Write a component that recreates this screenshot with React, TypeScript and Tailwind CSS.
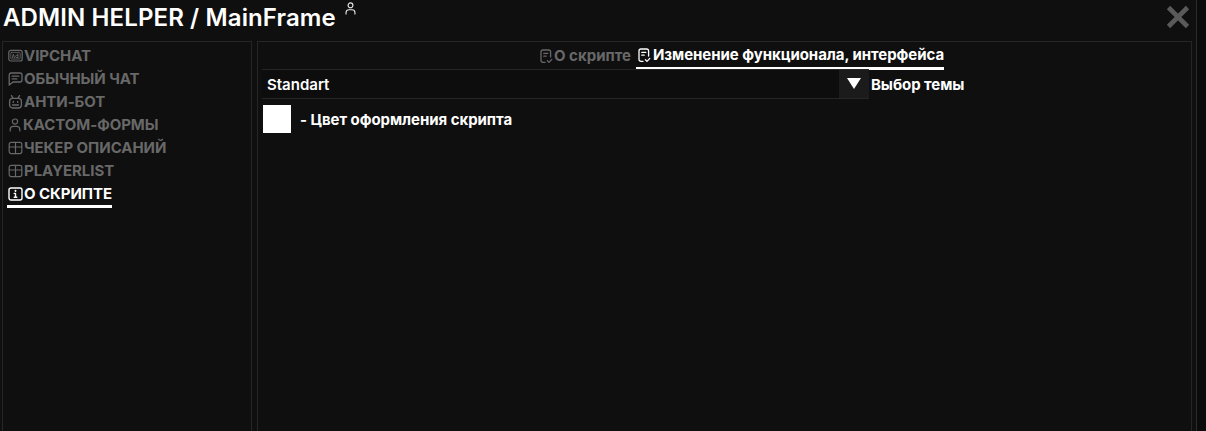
import {ReactNode} from 'react';

const iconProps = {
  fill: 'none',
  stroke: 'currentColor',
  strokeLinecap: 'round' as const,
  strokeLinejoin: 'round' as const,
};

function AdIcon() {
  return (
    <svg width="15" height="14" viewBox="0 0 15 14" {...iconProps} strokeWidth="1.2">
      <rect x="0.8" y="1.4" width="13.4" height="10.6" rx="2" />
      <rect x="2.8" y="3.4" width="9.4" height="6.6" rx="0.8" strokeWidth="0.8" />
      <path d="M4.4 8.8 5.4 5 6.4 8.8M9.9 4.8v4M9.9 8.6H8.8a1 1 0 0 1 0-2.4h1.1" strokeWidth="0.9" />
    </svg>
  );
}

function ChatIcon() {
  return (
    <svg width="15" height="14" viewBox="0 0 15 14" {...iconProps} strokeWidth="1.3">
      <path d="M3 1h9a2 2 0 0 1 2 2v5a2 2 0 0 1-2 2H5l-3.8 3V3a2 2 0 0 1 1.8-2Z" />
      <path d="M4.2 4.2h6.6M4.2 6.9h4.6" />
    </svg>
  );
}

function BotIcon() {
  return (
    <svg width="15" height="14" viewBox="0 0 15 14" {...iconProps} strokeWidth="1.3">
      <path d="M3.5 0.6 5 3.4M11.5 0.6 10 3.4" />
      <rect x="1.6" y="3.4" width="11.8" height="9.6" rx="3" />
      <path d="M5.3 6.4v1M9.7 6.4v1M4.5 10h6" />
    </svg>
  );
}

function UserIcon({size = 14}: {size?: number}) {
  return (
    <svg width={size} height={size} viewBox="0 0 14 14" {...iconProps} strokeWidth="1.2">
      <circle cx="7" cy="3.6" r="2.6" />
      <path d="M2.2 13v-1.6A3.2 3.2 0 0 1 5.4 8.4h3.2a3.2 3.2 0 0 1 3.2 3V13" />
    </svg>
  );
}

function TableIcon() {
  return (
    <svg width="15" height="14" viewBox="0 0 15 14" {...iconProps} strokeWidth="1.2">
      <rect x="1.2" y="1.4" width="12.6" height="11.2" rx="2" />
      <path d="M1.2 6h12.6M7.5 1.4v11.2" />
    </svg>
  );
}

function InfoIcon() {
  return (
    <svg width="15" height="14" viewBox="0 0 15 14" {...iconProps} strokeWidth="1.4">
      <rect x="1" y="1" width="13" height="12" rx="2" />
      <path d="M6.2 6.4h1.3v3.8M6.2 10.2h2.6" />
      <path d="M7.5 3.6v.5" strokeWidth="1.8" />
    </svg>
  );
}

function ScriptIcon() {
  return (
    <svg width="13" height="15" viewBox="0 0 13 15" {...iconProps} strokeWidth="1.3">
      <path d="M5 13.4H3a2 2 0 0 1-2-2V3a2 2 0 0 1 2-2h5.6a2 2 0 0 1 2 2v5" />
      <path d="M3.8 4.4h4M3.8 7.2h2.4M7.4 11.8l1.6 1.6 2.8-3" />
    </svg>
  );
}

function CloseIcon() {
  return (
    <svg width="26" height="26" viewBox="0 0 26 26" fill="none" stroke="#5a5a5a" strokeWidth="4.6">
      <path d="M3.5 3.5 22.5 22.5M22.5 3.5 3.5 22.5" />
    </svg>
  );
}

const sideItems: {label: string; icon: ReactNode; active?: boolean}[] = [
  {label: 'VIPCHAT', icon: <AdIcon />},
  {label: 'ОБЫЧНЫЙ ЧАТ', icon: <ChatIcon />},
  {label: 'АНТИ-БОТ', icon: <BotIcon />},
  {label: 'КАСТОМ-ФОРМЫ', icon: <UserIcon />},
  {label: 'ЧЕКЕР ОПИСАНИЙ', icon: <TableIcon />},
  {label: 'PLAYERLIST', icon: <TableIcon />},
  {label: 'О СКРИПТЕ', icon: <InfoIcon />, active: true},
];

export default function App() {
  return (
    <div className="flex h-[431px] w-[1206px] overflow-hidden bg-[#0b0b0b] font-['Inter',sans-serif] text-white">
      <div className="flex h-full w-[1197px] flex-col border-r border-[#2c2c2c] bg-[#0f0f0f]">
        {/* Title bar */}
        <div className="flex h-[41px] shrink-0 items-start justify-between pl-[3px] pr-[5px]">
          <div className="flex items-start gap-[8px]">
            <span className="mt-[3px] text-[24px] font-semibold leading-[29px] tracking-[0.12px]">
              ADMIN HELPER / MainFrame
            </span>
            <span className="mt-[2px] text-[#e6e6e6]">
              <UserIcon size={13} />
            </span>
          </div>
          <span className="mt-[4px]">
            <CloseIcon />
          </span>
        </div>

        {/* Body */}
        <div className="flex min-h-0 flex-1 gap-[5px] pl-[2px] pr-[4px]">
          <aside className="flex w-[250px] shrink-0 flex-col items-start border-x border-t border-[#262626] pl-[4px] pt-[3px]">
            {sideItems.map((item) => (
              <div
                key={item.label}
                className={`flex h-[23px] items-center gap-px pb-px pl-px text-[15px] font-bold leading-[18px] tracking-[-0.05px] ${
                  item.active ? 'text-white' : 'text-[#686868]'
                }`}
              >
                {item.icon}
                <span>{item.label}</span>
              </div>
            ))}
            <div className="-mt-px h-[3px] w-[105px] bg-white" />
          </aside>

          <main className="flex min-w-0 flex-1 flex-col border-x border-t border-[#262626] pl-[4px]">
            <div className="flex h-[27px] shrink-0 items-start pl-[273px]">
              <div className="flex h-[27px] items-center gap-px pl-[5px] pt-[2px] text-[15px] font-bold text-[#686868]">
                <ScriptIcon />
                <span>О скрипте</span>
              </div>
              <div className="ml-[5px] flex h-[28px] items-center gap-[2px] border-b-[3px] border-white pl-[2px] pt-[2px] text-[15px] font-bold tracking-[-0.05px] text-white">
                <ScriptIcon />
                <span>Изменение функционала, интерфейса</span>
              </div>
            </div>

            <div className="flex items-center">
              <div className="flex h-[30px] w-[607px] items-center justify-between border-y border-[#262626] bg-[#0d0d0d]">
                <span className="pl-[5px] pt-[2px] text-[15px] font-semibold">Standart</span>
                <span className="flex h-full w-[30px] items-center justify-center bg-[#1b1b1b] pb-[2px]">
                  <span className="h-0 w-0 border-x-[7px] border-t-[11px] border-x-transparent border-t-white" />
                </span>
              </div>
              <span className="ml-[2px] pt-[2px] text-[15px] font-bold tracking-[-0.05px]">Выбор темы</span>
            </div>

            <div className="mt-[6px] flex items-center pl-px">
              <div className="h-[28px] w-[28px] bg-white" />
              <span className="ml-[9px] pt-[2px] text-[15px] font-bold tracking-[-0.05px]">
                - Цвет оформления скрипта
              </span>
            </div>
          </main>
        </div>
      </div>
    </div>
  );
}
